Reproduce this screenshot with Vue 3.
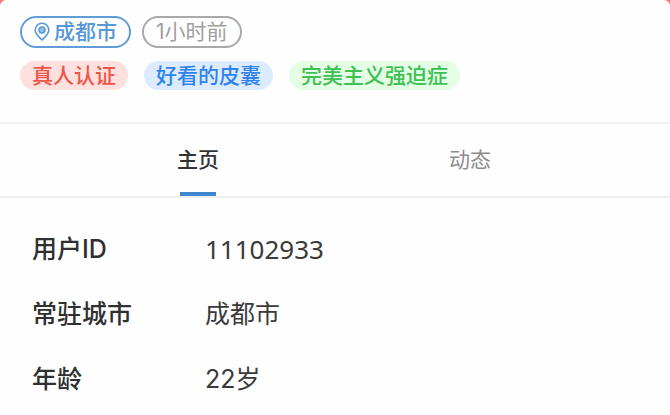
<script setup>
import { ref } from "vue";

const activeTab = ref("home");

const tabs = [
  { id: "home", name: "主页" },
  { id: "posts", name: "动态" },
];

const tags = [
  { text: "真人认证", color: "red" },
  { text: "好看的皮囊", color: "blue" },
  { text: "完美主义强迫症", color: "green" },
];

const infos = [
  { label: "用户ID", value: "11102933", number: true },
  { label: "常驻城市", value: "成都市" },
  { label: "年龄", value: "22岁" },
];
</script>

<template>
  <main class="profile">
    <header>
      <div class="status">
        <span class="pill city">
          <svg viewBox="0 0 16 20" width="16" height="20" fill="none">
            <path
              d="M8 18C5.5 15.4 1.2 12 1.2 8a6.8 6.8 0 0 1 13.6 0c0 4-4.3 7.4-6.8 10z"
              stroke="currentColor"
              stroke-width="1.6"
              stroke-linejoin="round"
            />
            <circle cx="8" cy="8" r="3" fill="#8fc1ee" stroke="currentColor" stroke-width="1.5" />
          </svg>
          成都市
        </span>
        <span class="pill">1小时前</span>
      </div>
      <div class="tags">
        <span v-for="tag in tags" :key="tag.text" class="tag" :class="tag.color">{{ tag.text }}</span>
      </div>
    </header>

    <nav class="tabs">
      <button
        v-for="tab in tabs"
        :key="tab.id"
        type="button"
        :class="{ active: activeTab === tab.id }"
        @click="activeTab = tab.id"
      >
        {{ tab.name }}
      </button>
    </nav>

    <dl v-if="activeTab === 'home'">
      <div v-for="info in infos" :key="info.label" class="row">
        <dt>{{ info.label }}</dt>
        <dd :class="{ number: info.number }">{{ info.value }}</dd>
      </div>
    </dl>
  </main>
</template>

<style>
body {
  background-color: #f9736c;
}
</style>

<style scoped>
.profile {
  min-height: 100vh;
  box-sizing: border-box;
  background-color: #fefefe;
  border-radius: 6px 6px 0 0;
  font-family: Inter, "Noto Sans CJK SC", sans-serif;
}

header {
  padding: 16px 20px 32px;
}

.status {
  display: flex;
  gap: 11px;
}

.pill {
  display: flex;
  align-items: center;
  box-sizing: border-box;
  height: 32px;
  padding: 0 12px;
  border: 2px solid #a9a9a9;
  border-radius: 16px;
  color: #a0a0a0;
  font-size: 21px;
  line-height: 28px;
  white-space: nowrap;
}

.pill.city {
  gap: 4px;
  border-color: #609dd6;
  color: #5798d6;
  font-weight: 500;
}

.tags {
  display: flex;
  gap: 16px;
  margin-top: 13px;
}

.tag {
  padding: 0 12px;
  border-radius: 15px;
  font-size: 21px;
  font-weight: 500;
  line-height: 29px;
  white-space: nowrap;
}

.red {
  background-color: #fee0de;
  color: #ec5549;
}

.blue {
  background-color: #dcebff;
  color: #2f83ee;
}

.green {
  background-color: #e4fde5;
  color: #3cc152;
}

.tabs {
  display: flex;
  padding: 0 64px 0 62px;
  border-top: 2px solid #f1f1f1;
  border-bottom: 2px solid #eeeeee;
}

.tabs button {
  display: flex;
  flex: 1;
  flex-direction: column;
  align-items: center;
  padding: 21px 0 0;
  border: none;
  background: none;
  color: #8c8c8c;
  font-family: inherit;
  font-size: 21px;
  line-height: 30px;
  cursor: pointer;
}

.tabs button::after {
  content: "";
  width: 36px;
  height: 4px;
  margin-top: 17px;
}

.tabs button.active {
  color: #333333;
  font-weight: 500;
}

.tabs button.active::after {
  background-color: #3e86cd;
}

dl {
  margin: 0;
  padding: 21px 32px 0;
}

.row {
  display: flex;
  padding-bottom: 5px;
  color: #3a3a3a;
  font-size: 25px;
  line-height: 60px;
}

.row:last-child {
  padding-bottom: 0;
}

dt {
  width: 173px;
  color: #303030;
  font-weight: 500;
}

dd {
  margin: 0;
}

.number {
  font-family: "Noto Sans", sans-serif;
  font-size: 26px;
}
</style>
